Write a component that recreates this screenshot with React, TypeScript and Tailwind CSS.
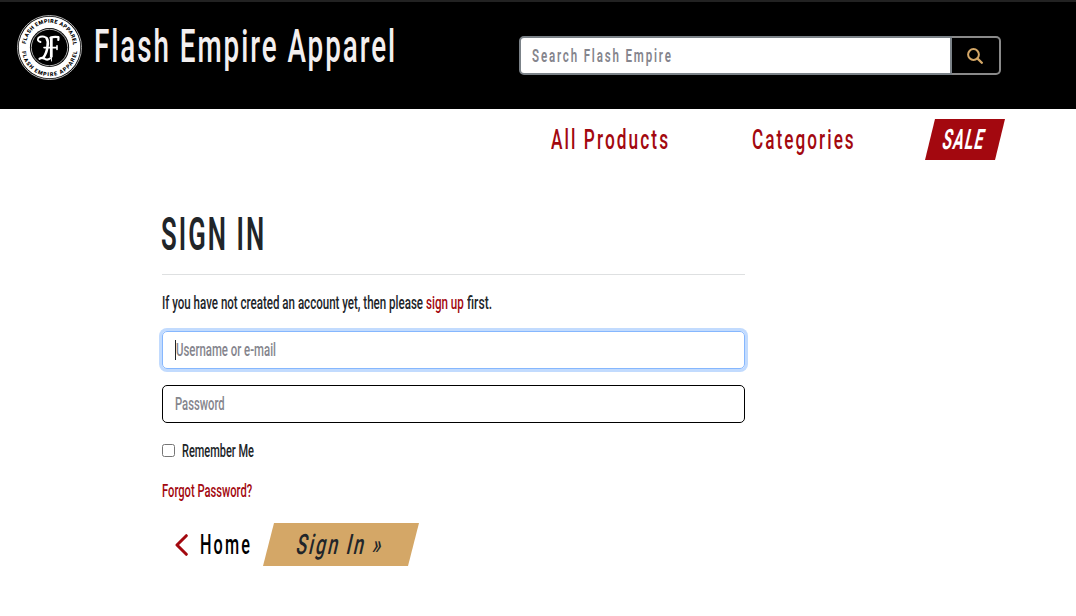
import { useLayoutEffect, useRef } from "react";
import type { ReactNode } from "react";

type FitProps = { width: number; slanted?: boolean; className?: string; children: ReactNode };

// Condenses a line of text horizontally so that its ink spans `width` pixels.
function Fit({ width, slanted = false, className = "", children }: FitProps) {
  const ref = useRef<HTMLSpanElement>(null);
  useLayoutEffect(() => {
    const el = ref.current;
    if (!el) return;
    const spacing = parseFloat(getComputedStyle(el).letterSpacing) || 0;
    const natural = el.offsetWidth - spacing;
    el.style.transform = `${slanted ? "skewX(-13deg) " : ""}scaleX(${width / natural})`;
  }, [width, slanted]);
  return (
    <span className="inline-flex shrink-0" style={{ width }}>
      <span ref={ref} className={"inline-block origin-left whitespace-nowrap " + className}>
        {children}
      </span>
    </span>
  );
}

function Logo() {
  return (
    <svg viewBox="0 0 66 66" className="h-[66px] w-[66px] shrink-0">
      <defs>
        <path id="ring-top" d="M9.800 32.500 A23.700 23.700 0 0 1 57.200 32.500" />
        <path id="ring-bottom" d="M5.800 34.500 A27.700 27.700 0 0 0 61.200 34.500" />
      </defs>
      <circle cx="33.500" cy="33.500" r="32" fill="none" stroke="#c5c5c5" strokeWidth="0.9" />
      <circle cx="33.500" cy="33.500" r="30.8" fill="#fff" />
      <circle cx="33.500" cy="33.500" r="19.6" fill="#000" />
      <circle cx="33.500" cy="33.500" r="18.2" fill="none" stroke="#ddd" strokeWidth="0.8" />
      <g fill="#000" fontFamily="Roboto, sans-serif" fontSize="5.4" fontWeight="900">
        <text>
          <textPath href="#ring-top" startOffset="2.500" textLength="70">FLASH EMPIRE APPAREL</textPath>
        </text>
        <text>
          <textPath href="#ring-bottom" startOffset="3" textLength="81">FLASH EMPIRE APPAREL</textPath>
        </text>
      </g>
      <g fill="none" stroke="#fff" strokeLinecap="round" strokeLinejoin="round">
        <path d="M24.500 28 Q20.500 27 22.500 23.800 Q26 21.500 30 23.500" strokeWidth="1.9" />
        <path d="M30.500 24 Q32.500 27 31.500 32 Q31 39 27 44" strokeWidth="2.600" />
        <path d="M35.300 24 V42.500" strokeWidth="2.800" />
        <path d="M35.500 42 V47" strokeWidth="0.9" />
        <path d="M34.500 23.800 Q38 22.300 42.500 23.200 L42.300 26" strokeWidth="2.200" />
        <path d="M28 33.600 H41 M41 31.800 V35.500" strokeWidth="1.600" />
        <path d="M23.500 44.800 Q26.500 43 29 44.800 Q31.500 46.500 34 44.500" strokeWidth="2.200" />
      </g>
    </svg>
  );
}

export default function App() {
  return (
    <div className="h-[616px] w-[1076px] overflow-hidden bg-white font-['Roboto',sans-serif] text-[#212529]">
      <header className="flex h-[109px] items-start border-t-2 border-[#222] bg-black pl-4">
        <a href="#" className="mt-3 flex items-center">
          <Logo />
          <span className="-mt-[3px] ml-3 flex text-[46px] leading-[56px] text-[#f3efef]">
            <Fit width={301} className="font-medium tracking-[0.07em]">Flash Empire Apparel</Fit>
          </span>
        </a>
        <form className="mt-[34px] ml-auto mr-[75px] flex h-[39px] w-[482px]">
          <div className="flex flex-1 items-center rounded-l-[5px] border-2 border-[#7b8288] bg-white pl-[11px] text-[18px] leading-6 text-[#85858d]">
            <Fit width={139} className="font-semibold tracking-[0.16em]">Search Flash Empire</Fit>
          </div>
          <button type="button" aria-label="Search" className="flex w-[49px] items-center justify-center rounded-r-[5px] border-2 border-l-0 border-[#8a8a8a] pr-px text-[#d4a767]">
            <svg viewBox="0 0 16 16" className="h-4 w-4" fill="none" stroke="currentColor" strokeLinecap="round">
              <circle cx="6.500" cy="6.500" r="5.400" strokeWidth="2" />
              <path d="M10.600 10.600 L14.800 14.800" strokeWidth="2.300" />
            </svg>
          </button>
        </form>
      </header>

      <nav className="flex h-[61px] items-center justify-end pr-[71px] text-[28px] leading-9 text-[#a3080f]">
        <a href="#" className="mr-[84px] flex"><Fit width={117} className="font-medium tracking-[0.12em]">All Products</Fit></a>
        <a href="#" className="mr-[71px] flex"><Fit width={102} className="font-medium tracking-[0.12em]">Categories</Fit></a>
        <a href="#" className="flex h-[41px] w-20 items-center bg-[#a3080f] pl-[18px] text-white [clip-path:polygon(10px_0,100%_0,70px_100%,0_100%)]">
          <Fit width={41} slanted className="font-bold tracking-[0.08em]">SALE</Fit>
        </a>
      </nav>

      <main className="ml-[162px] w-[583px] pt-9">
        <h1 className="-ml-px flex text-[47px] leading-[56px]"><Fit width={103} className="font-semibold tracking-[0.08em]">SIGN IN</Fit></h1>
        <hr className="mt-3 border-[#dee0e1]" />
        <p className="mt-4 flex text-[18px] leading-6">
          <Fit width={261} className="font-medium">If you have not created an account yet, then please</Fit>
          <a href="#" className="ml-[3px] flex text-[#a3080f]"><Fit width={38} className="font-medium">sign up</Fit></a>
          <span className="ml-[3px] flex"><Fit width={25} className="font-medium">first.</Fit></span>
        </p>
        <div className="mt-4 flex h-[38px] items-center rounded-[5px] border border-[#86b7fe] pl-3 text-[18px] leading-6 text-[#85858d] ring-3 ring-[#c2dbfe]">
          <span className="h-5 w-px bg-[#212529]" />
          <Fit width={100} className="font-medium">Username or e-mail</Fit>
        </div>
        <div className="mt-4 flex h-[38px] items-center rounded-[5px] border border-black pl-3 text-[18px] leading-6 text-[#85858d]">
          <Fit width={50} className="font-medium">Password</Fit>
        </div>
        <label className="mt-4 flex items-center text-[18px] leading-6">
          <input type="checkbox" className="-mt-px mr-[7px] h-[13px] w-[13px]" />
          <Fit width={72} className="font-medium">Remember Me</Fit>
        </label>
        <a href="#" className="mt-4 flex text-[18px] leading-6 text-[#a3080f]"><Fit width={90} className="font-medium">Forgot Password?</Fit></a>
        <div className="mt-5 flex h-[43px] items-center text-[28px] leading-9">
          <a href="#" className="flex items-center pl-[13px] text-black">
            <svg viewBox="0 0 13 22" className="mr-3 h-[22px] w-[13px]" fill="none" stroke="#a3080f" strokeWidth="3" strokeLinecap="round" strokeLinejoin="round">
              <path d="M11.300 1.700 L2 11 L11.300 20.300" />
            </svg>
            <Fit width={50} className="font-medium tracking-[0.13em]">Home</Fit>
          </a>
          <button type="button" className="ml-[13px] flex h-[43px] w-[156px] items-center bg-[#d4a767] pl-[34px] [clip-path:polygon(11px_0,100%_0,145px_100%,0_100%)]">
            <Fit width={85} slanted className="font-medium tracking-[0.12em]">Sign In »</Fit>
          </button>
        </div>
      </main>
    </div>
  );
}
